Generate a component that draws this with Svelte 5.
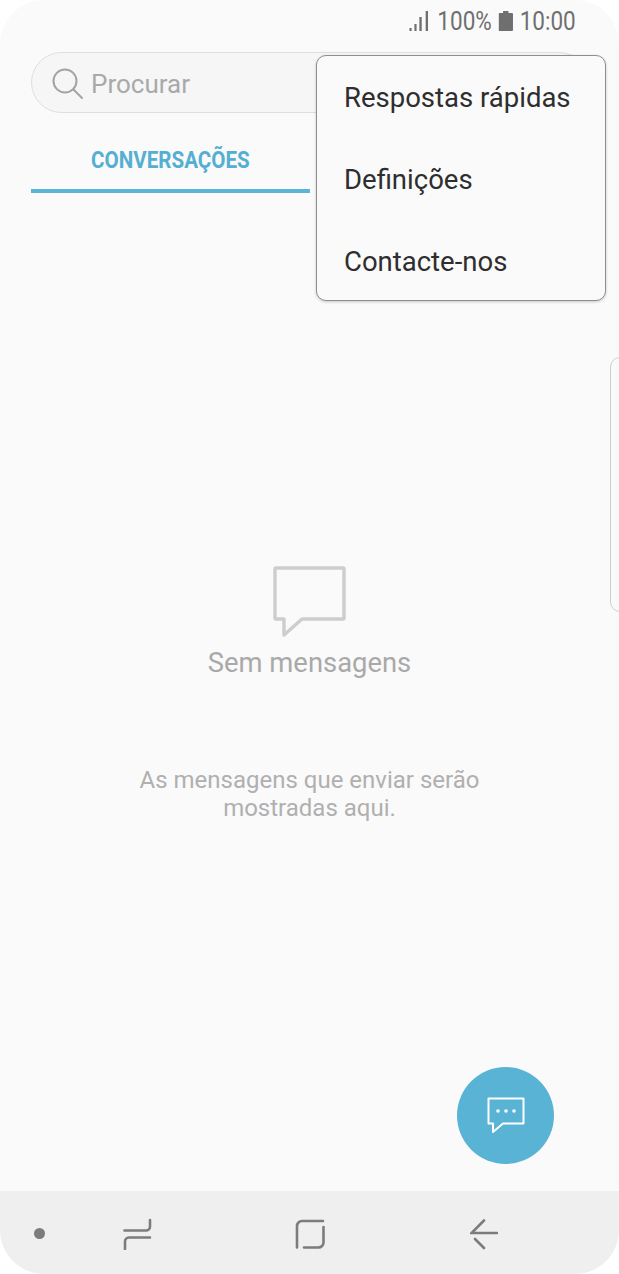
<script>
  const menuItems = ['Respostas rápidas', 'Definições', 'Contacte-nos'];
</script>

<div class="screen">
  <header class="status">
    <div class="status-group">
      <svg class="signal" width="24" height="22" viewBox="0 0 24 22">
        <rect x="1" y="18" width="2.4" height="3" />
        <rect x="6.500" y="14" width="2.4" height="7" />
        <rect x="12" y="7" width="2.6" height="14" />
        <rect x="19" y="1" width="2.6" height="20" />
      </svg>
      <span class="pct">100%</span>
      <svg class="battery" width="16" height="20" viewBox="0 0 16 20">
        <path d="M5 0h6v2h4a1 1 0 0 1 1 1v16a1 1 0 0 1-1 1H1a1 1 0 0 1-1-1V3a1 1 0 0 1 1-1h4z" />
      </svg>
      <span class="time">10:00</span>
    </div>
  </header>

  <div class="search">
    <svg width="32" height="32" viewBox="0 0 32 32" fill="none" stroke="#a3a3a3" stroke-width="2">
      <circle cx="13" cy="13" r="11.500" />
      <path d="M21.500 21.500l8.500 8.500" stroke-linecap="round" />
    </svg>
    <span>Procurar</span>
  </div>

  <nav class="tabs">
    <div class="tab active"><span>CONVERSAÇÕES</span></div>
  </nav>

  <main class="empty">
    <svg width="74" height="72" viewBox="0 0 74 72" fill="none" stroke="#cdcdcd" stroke-width="3.4" stroke-linejoin="round">
      <path d="M3 2h67a1 1 0 0 1 1 1v49a1 1 0 0 1-1 1H29L11 69V53H3a1 1 0 0 1-1-1V3a1 1 0 0 1 1-1z" />
    </svg>
    <h2>Sem mensagens</h2>
    <p>As mensagens que enviar serão<br />mostradas aqui.</p>
  </main>

  <footer class="navbar">
    <span class="dot"></span>
    <svg class="nav-icon recents" width="29" height="32" viewBox="0 0 29 32">
      <path d="M1.500 12.500H23a4 4 0 0 0 4-4V2M27 19.500H6a4 4 0 0 0-4 4V31" />
    </svg>
    <svg class="nav-icon home" width="30" height="30" viewBox="0 0 30 30">
      <path d="M28 2H7a5 5 0 0 0-5 5v21.500M9 28.500h14.500a5 5 0 0 0 5-5V8" />
    </svg>
    <svg class="nav-icon back" width="28" height="32" viewBox="0 0 28 32">
      <path d="M27 15H1.500L14 2.500M5 21l9 9" />
    </svg>
  </footer>

  <div class="menu">
    {#each menuItems as item}
      <div class="menu-item">{item}</div>
    {/each}
  </div>

  <div class="edge"></div>

  <button class="fab" aria-label="Nova mensagem">
    <svg width="38" height="38" viewBox="0 0 38 38" fill="none" stroke="#fff" stroke-width="2" stroke-linejoin="round">
      <path d="M1.500 1.500h35v25H16L6 35v-8.500H1.500z" />
      <circle cx="11" cy="14" r="1.800" fill="#fff" stroke="none" />
      <circle cx="19" cy="14" r="1.800" fill="#fff" stroke="none" />
      <circle cx="27" cy="14" r="1.800" fill="#fff" stroke="none" />
    </svg>
  </button>
</div>

<style>
  :global(body) {
    background: #fff;
  }

  .screen {
    position: relative;
    width: 619px;
    height: 1274px;
    display: flex;
    flex-direction: column;
    background: #fafafa;
    border-radius: 44px;
    overflow: hidden;
    font-family: Roboto, "Noto Sans", sans-serif;
  }

  .status {
    height: 52px;
    flex: none;
    display: flex;
    justify-content: flex-end;
    padding: 8px 43.500px 0 0;
    box-sizing: border-box;
    color: #6f6f6f;
    font-size: 25px;
  }

  /* status text in the shot is narrower than Roboto */
  .status-group {
    height: 26px;
    display: flex;
    align-items: center;
    transform: scaleX(0.9);
    transform-origin: right center;
  }

  .signal {
    fill: #6f6f6f;
    margin-right: 8px;
  }

  .pct {
    margin-right: 8px;
  }

  .battery {
    fill: #6f6f6f;
    margin-right: 7px;
  }

  .search {
    flex: none;
    height: 61px;
    margin: 0 29px 0 31px;
    padding: 2px 0 0 20px;
    box-sizing: border-box;
    display: flex;
    align-items: center;
    gap: 7px;
    background: #f6f6f6;
    border: 1.500px solid #dedede;
    border-radius: 31px;
    color: #a9a9a9;
    font-size: 26px;
  }

  .tabs {
    flex: none;
    height: 80px;
    display: flex;
    padding: 0 31px;
  }

  .tab {
    width: 279px;
    height: 80px;
    box-sizing: border-box;
    display: flex;
    align-items: center;
    justify-content: center;
    padding-top: 17px;
  }

  .tab.active {
    border-bottom: 4px solid #5bb5d6;
    color: #55afd2;
    font-weight: 700;
    font-size: 24.500px;
  }

  .tab span {
    display: inline-block;
    transform: scaleX(0.84);
  }

  .empty {
    flex: 1;
    display: flex;
    flex-direction: column;
    align-items: center;
    padding-top: 373px;
    box-sizing: border-box;
  }

  .empty h2 {
    margin: 7px 0 0;
    font-size: 27.400px;
    font-weight: 400;
    line-height: 36px;
    color: #a9a9a9;
  }

  .empty p {
    margin: 85px 0 0;
    font-size: 24px;
    line-height: 28px;
    text-align: center;
    color: #b0b0b0;
  }

  .navbar {
    flex: none;
    height: 83px;
    padding-top: 2px;
    box-sizing: border-box;
    display: flex;
    align-items: center;
    background: #efefef;
  }

  .dot {
    width: 11px;
    height: 11px;
    margin-left: 34px;
    border-radius: 50%;
    background: #7c7c7c;
  }

  .nav-icon {
    fill: none;
    stroke: #7c7c7c;
    stroke-width: 2.600;
    stroke-linecap: round;
  }

  .recents {
    margin-left: 78px;
  }

  .home {
    margin-left: 143px;
  }

  .back {
    margin-left: 145px;
  }

  .menu {
    position: absolute;
    top: 55px;
    left: 316px;
    width: 290px;
    height: 246px;
    box-sizing: border-box;
    display: flex;
    flex-direction: column;
    background: #fafafa;
    border: 1px solid #8e8e8e;
    border-radius: 10px;
    box-shadow: 0 1px 3px rgba(0, 0, 0, 0.2);
  }

  .menu-item {
    flex: 0 0 82px;
    display: flex;
    align-items: center;
    padding-left: 27px;
    font-size: 27.500px;
    color: #2e2e2e;
  }

  .edge {
    position: absolute;
    top: 357px;
    right: -13px;
    width: 20px;
    height: 253px;
    border: 1.500px solid #cfcfcf;
    border-radius: 10px;
  }

  .fab {
    position: absolute;
    top: 1067px;
    left: 457px;
    width: 97px;
    height: 97px;
    padding: 0;
    display: flex;
    align-items: center;
    justify-content: center;
    background: #58b3d5;
    border: none;
    border-radius: 50%;
  }
</style>
